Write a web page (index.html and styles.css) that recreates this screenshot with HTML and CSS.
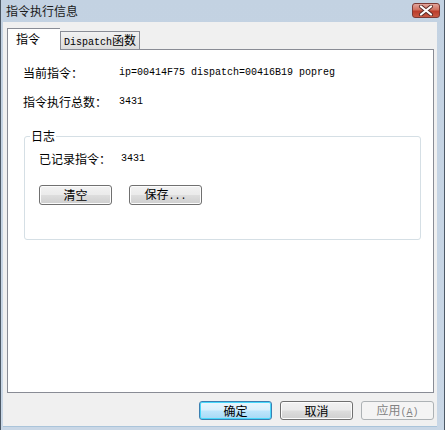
FILE: index.html
```html
<!DOCTYPE html>
<html>
<head>
<meta charset="utf-8">
<link rel="stylesheet" href="styles.css">
</head>
<body>
<div class="window">
  <div class="titlebar">
    <span class="title">指令执行信息</span>
    <span class="close">
      <svg width="16" height="11" viewBox="0 0 16 11">
        <path d="M3 1.5 L13 9.5 M13 1.5 L3 9.5" stroke="#5a2a26" stroke-width="4" stroke-linecap="round"/>
        <path d="M3 1.5 L13 9.5 M13 1.5 L3 9.5" stroke="#ffffff" stroke-width="2.2" stroke-linecap="round"/>
      </svg>
    </span>
  </div>
  <div class="client">
    <div class="tabs">
      <div class="tab active">指令</div>
      <div class="tab"><span class="mono">Dispatch</span>函数</div>
    </div>
    <div class="panel">
      <div class="row first"><span class="label">当前指令：</span><span class="mono">ip=00414F75 dispatch=00416B19 popreg</span></div>
      <div class="row"><span class="label">指令执行总数：</span><span class="mono">3431</span></div>
      <fieldset class="group">
        <legend>日志</legend>
        <div class="row grow"><span class="label short">已记录指令：</span><span class="mono">3431</span></div>
        <div class="btns">
          <button class="btn">清空</button>
          <button class="btn">保存<span class="mono">...</span></button>
        </div>
      </fieldset>
    </div>
    <div class="footer">
      <button class="btn default">确定</button>
      <button class="btn">取消</button>
      <button class="btn disabled">应用<span class="mono">(<u>A</u>)</span></button>
    </div>
  </div>
</div>
</body>
</html>
```

FILE: styles.css
```css
* { box-sizing: border-box; }
html, body { margin: 0; padding: 0; }
body {
  width: 445px;
  height: 430px;
  overflow: hidden;
  font-family: "Noto Sans CJK SC", "Noto Sans", sans-serif;
  font-size: 12px;
  color: #000;
  background: #f0f0f0;
}
.window {
  width: 445px;
  height: 430px;
  display: flex;
  flex-direction: column;
  background: linear-gradient(#c3d2e2, #c9d7e6);
  border: 1px solid #4d5966;
  border-top: none;
  border-bottom: none;
}
.titlebar {
  height: 22px;
  display: flex;
  align-items: center;
  justify-content: space-between;
  padding: 0 4px 0 5px;
  flex: none;
}
.title {
  font-size: 12px;
  line-height: 16px;
  color: #1a1a1a;
  margin-top: -1px;
}
.close {
  width: 28px;
  height: 15px;
  margin-top: -2px;
  border: 1px solid #7d3a35;
  border-radius: 3px;
  background: linear-gradient(#e2a59c 0%, #d0705f 45%, #bb3c2b 55%, #c85a45 100%);
  display: flex;
  align-items: center;
  justify-content: center;
}
.client {
  flex: 1;
  margin: 0 7px 3px 2px;
  background: #f0f0f0;
  display: flex;
  flex-direction: column;
  padding: 6px 0 0 4px;
  border-bottom: 1px solid #aac4da;
}
.mono {
  font-family: "Liberation Mono", "DejaVu Sans Mono", monospace;
  font-size: 10px;
}
.tabs {
  display: flex;
  align-items: flex-end;
  height: 21px;
  flex: none;
}
.tab {
  height: 18px;
  line-height: 16px;
  padding: 0 3px;
  border: 1px solid #898c95;
  border-bottom: none;
  background: linear-gradient(#f2f2f2, #dcdcdc);
  white-space: nowrap;
}
.tab.active {
  height: 22px;
  width: 53px;
  margin-bottom: -1px;
  padding: 2px 0 0 8px;
  background: #fff;
  position: relative;
  z-index: 1;
  border-right: none;
}
.panel {
  width: 427px;
  height: 344px;
  flex: none;
  background: #fff;
  border: 1px solid #898c95;
  padding: 15px 0 0 15px;
}
.row {
  display: flex;
  height: 16px;
  line-height: 16px;
  align-items: center;
  margin-bottom: 13px;
  white-space: nowrap;
}
.label { width: 96px; flex: none; }
.label.short { width: 82px; }
.group {
  margin: 18px 0 0 1px;
  width: 397px;
  padding: 0 14px 34px 14px;
  border: 1px solid #d5dfe5;
  border-radius: 3px;
}
.group legend {
  margin-left: -9px;
  padding: 0 1px;
  line-height: 16px;
  font-size: 12px;
}
.row.grow { margin: 7px 0 0 0; }
.btns {
  display: flex;
  gap: 17px;
  margin-top: 18px;
}
.btn {
  width: 73px;
  height: 20px;
  padding: 0;
  font-family: "Noto Sans CJK SC", "Noto Sans", sans-serif;
  font-size: 12px;
  line-height: 16px;
  color: #000;
  border: 1px solid #707070;
  border-radius: 3px;
  background: linear-gradient(#f2f2f2 0%, #ebebeb 48%, #dddddd 52%, #cfcfcf 100%);
  box-shadow: inset 0 0 0 1px #fcfcfc;
}
.footer {
  display: flex;
  justify-content: flex-end;
  gap: 8px;
  padding: 8px 3px 0 0;
}
.footer .btn { width: 73px; height: 19px; }
.btn.default {
  border-color: #3c7fb1;
  background: linear-gradient(#eaf6fd 0%, #d9f0fc 48%, #bee6fd 52%, #a7d9f5 100%);
  box-shadow: inset 0 0 0 1px #48d8fb;
}
.btn.disabled {
  color: #838383;
  border-color: #adb2b5;
  background: #f4f4f4;
  box-shadow: none;
}
```
